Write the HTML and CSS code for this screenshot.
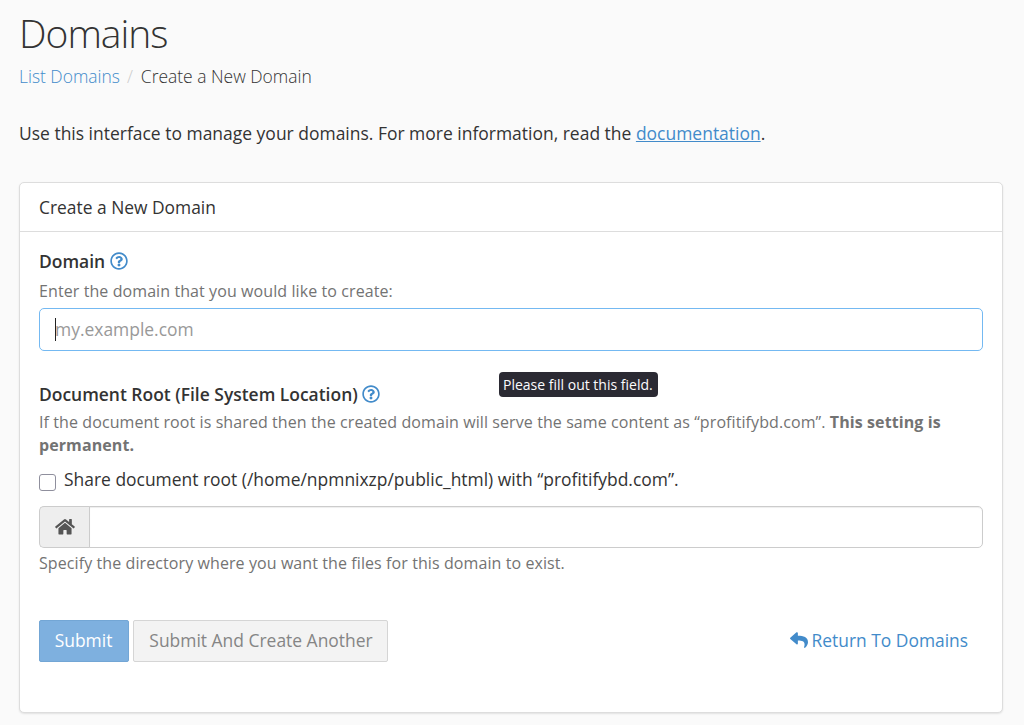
FILE: index.html
```html
<!DOCTYPE html>
<html lang="en">
<head>
<meta charset="utf-8">
<title>Domains</title>
<link rel="stylesheet" href="styles.css">
</head>
<body>
<svg class="sprite" width="0" height="0">
  <symbol id="help" viewBox="0 0 512 512"><path d="M256 8C119.043 8 8 119.083 8 256c0 136.997 111.043 248 248 248s248-111.003 248-248C504 119.083 392.957 8 256 8zm0 448c-110.532 0-200-89.431-200-200 0-110.495 89.472-200 200-200 110.491 0 200 89.471 200 200 0 110.53-89.431 200-200 200zm107.244-255.2c0 67.052-72.421 68.084-72.421 92.863V300c0 6.627-5.373 12-12 12h-45.647c-6.627 0-12-5.373-12-12v-8.659c0-35.745 27.1-50.034 47.579-61.516 17.561-9.845 28.324-16.541 28.324-29.579 0-17.246-21.999-28.693-39.784-28.693-23.189 0-33.894 10.977-48.942 29.969-4.057 5.12-11.46 6.071-16.666 2.124l-27.824-21.098c-5.107-3.872-6.251-11.066-2.644-16.363C184.846 131.491 214.94 112 261.794 112c49.071 0 101.45 38.304 101.45 88.8zM298 368c0 23.159-18.841 42-42 42s-42-18.841-42-42 18.841-42 42-42 42 18.841 42 42z"/></symbol>
  <symbol id="home" viewBox="0 0 576 512"><path d="M280.37 148.26L96 300.11V464a16 16 0 0 0 16 16l112.06-.29a16 16 0 0 0 15.92-16V368a16 16 0 0 1 16-16h64a16 16 0 0 1 16 16v95.64a16 16 0 0 0 16 16.05L464 480a16 16 0 0 0 16-16V300L295.67 148.26a12.19 12.19 0 0 0-15.3 0zM571.6 251.47L488 182.56V44.05a12 12 0 0 0-12-12h-56a12 12 0 0 0-12 12v72.61L318.47 43a48 48 0 0 0-61 0L4.34 251.47a12 12 0 0 0-1.6 16.9l25.5 31A12 12 0 0 0 45.15 301l235.22-193.74a12.19 12.19 0 0 1 15.3 0L530.9 301a12 12 0 0 0 16.9-1.6l25.5-31a12 12 0 0 0-1.7-16.93z"/></symbol>
  <symbol id="reply" viewBox="0 0 512 512"><path d="M8.309 189.836L184.313 37.851C199.719 24.546 224 35.347 224 56.015v80.053c160.629 1.839 288 34.032 288 186.258 0 61.441-39.581 122.309-83.333 154.132-13.653 9.931-33.111-2.533-28.077-18.631 45.344-145.012-21.507-183.51-176.59-185.742V360c0 20.7-24.3 31.453-39.687 18.164l-176.004-152c-11.071-9.562-11.086-26.753 0-36.328z"/></symbol>
</svg>
<main class="page">
  <h1 class="title">Domains</h1>
  <nav class="crumbs"><a class="link" href="#">List Domains</a><span class="slash">/</span><span>Create a New Domain</span></nav>
  <p class="intro"><span class="line">Use this interface to manage your domains. For more information, read the <a class="link doc" href="#">documentation</a>.</span></p>
  <section class="panel">
    <h2 class="panel-head"><span>Create a New Domain</span></h2>
    <form class="panel-body">
      <div class="field domain">
        <label class="label"><span>Domain</span><svg class="help-icon"><use href="#help"/></svg></label>
        <p class="hint"><span>Enter the domain that you would like to create:</span></p>
        <div class="input-wrap"><input class="input focused" type="text" placeholder="my.example.com"><i class="caret"></i><div class="tooltip">Please fill out this field.</div></div>
      </div>
      <div class="field root">
        <label class="label"><span>Document Root (File System Location)</span><svg class="help-icon"><use href="#help"/></svg></label>
        <p class="hint"><span>If the document root is shared then the created domain will serve the same content as “profitifybd.com”.</span> <b>This setting is<br>permanent.</b></p>
        <label class="check"><input class="box" type="checkbox"><span>Share document root (/home/npmnixzp/public_html) with “profitifybd.com”.</span></label>
        <div class="group"><span class="addon"><svg class="home-icon"><use href="#home"/></svg></span><input class="input" type="text"></div>
        <p class="hint"><span>Specify the directory where you want the files for this domain to exist.</span></p>
      </div>
      <div class="actions">
        <button class="btn primary" type="button">Submit</button>
        <button class="btn secondary" type="button">Submit And Create Another</button>
        <a class="link return" href="#"><svg class="reply-icon"><use href="#reply"/></svg><span>Return To Domains</span></a>
      </div>
    </form>
  </section>
</main>
</body>
</html>
```
FILE: styles.css
```css
* { box-sizing: border-box; }
body { margin: 0; background: #fafafa; color: #333; font: 17.45px/24px "Open Sans", sans-serif; overflow: hidden; }
.sprite { display: none; }
svg { fill: currentColor; flex: none; }
h1, h2, p { margin: 0; font-weight: 400; }
.page { padding: 9px 21px 0 19px; height: 725px; }
.title { font-size: 39px; font-weight: 300; line-height: 48px; letter-spacing: -1px; }
.crumbs { display: flex; margin-top: 7px; font-weight: 300; }
.slash { color: #ccc; margin: 0 8px 0 7px; }
.link { color: #428bca; text-decoration: none; }
.link.doc { text-decoration: underline; }
.intro { margin-top: 33px; font-size: 17.48px; }
.panel { margin-top: 37px; height: 531px; background: #fff; border: 1px solid #ddd; border-radius: 5px; box-shadow: 0 1px 2px rgba(0,0,0,.1); }
.panel-head { height: 49px; padding: 12px 19px; font-size: 17.4px; border-bottom: 1px solid #ddd; }
.panel-body { padding: 17px 19px 0; }
.label { display: flex; align-items: center; font-weight: 600; height: 24px; }
.help-icon { width: 18px; height: 18px; margin-left: 5px; color: #428bca; }
.root .help-icon { margin-left: 4px; }
.hint { font-size: 16px; letter-spacing: .09px; line-height: 23px; color: #737373; }
.domain .hint { margin-top: 7px; }
.input-wrap { position: relative; margin-top: 5px; }
.input { display: block; width: 100%; height: 43px; border: 1px solid #ccc; border-radius: 5px; padding: 0 15px; font: inherit; outline: 0; background: #fff; box-shadow: inset 0 1px 1px rgba(0,0,0,.07); }
.input::placeholder { color: #999; opacity: 1; }
.input.focused { padding-bottom: 2px; border-color: #74b9f2; box-shadow: none; }
.caret { position: absolute; left: 16px; top: 10px; width: 1px; height: 23px; background: #222; }
.tooltip { position: absolute; left: 460px; top: 64px; width: 159px; height: 25px; padding: 0 4px; background: #2b2a33; color: #fbfbfe; font-size: 14px; line-height: 26px; border-radius: 4px; white-space: nowrap; }
.root { margin-top: 31px; }
.root .label + .hint { margin-top: 5px; }
.check { display: flex; height: 24px; margin-top: 10px; }
.box { appearance: none; width: 17px; height: 17px; margin: 7px 8px 0 0; border: 1px solid #8f8f9d; border-radius: 3px; background: #fff; flex: none; }
.group { display: flex; margin: 15px 0 4px; }
.addon { display: flex; align-items: center; justify-content: center; width: 51px; height: 42px; background: #eee; border: 1px solid #ccc; border-right: 0; border-radius: 5px 0 0 5px; color: #555; margin-right: -1px; }
.home-icon { width: 20px; height: 17.5px; }
.group .input { flex: 1; height: 42px; border-radius: 0 5px 5px 0; }
.actions { display: flex; gap: 4px; margin-top: 45px; }
.btn { height: 42px; padding: 0 15px 2px; font: inherit; border: 1px solid; border-radius: 2px; white-space: nowrap; }
.primary { width: 90px; padding-left: 14px; background: #7eb0df; border-color: #73a6d5; color: #fff; }
.secondary { width: 255px; padding: 0 14px 2px 15px; background: #f3f3f3; border-color: #d5d5d5; color: #858585; }
.return { display: flex; align-items: center; margin-left: auto; padding: 0 15px 2px 0; gap: 4px; font-size: 17.4px; }
.reply-icon { width: 18px; height: 18px; }
```
